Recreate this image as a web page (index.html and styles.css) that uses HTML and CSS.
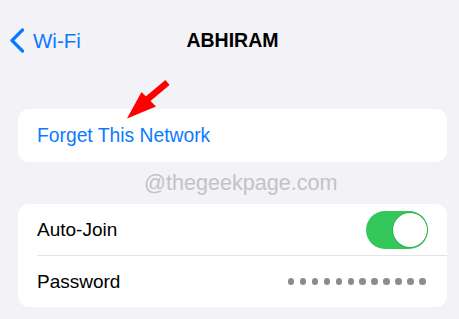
FILE: index.html
```html
<!DOCTYPE html>
<html>
<head>
<meta charset="utf-8">
<link rel="stylesheet" href="styles.css">
</head>
<body>
<div class="page">
  <header class="nav">
    <a class="back">
      <svg class="chev" width="16" height="26" viewBox="0 0 16 26"><path d="M13.5 2 L3 12.5 L13.5 23" fill="none" stroke="#0a7aff" stroke-width="3.2" stroke-linecap="round" stroke-linejoin="round"/></svg>
      <span class="back-label">Wi-Fi</span>
    </a>
    <h1 class="title">ABHIRAM</h1>
    <span></span>
  </header>

  <section class="card single">
    <div class="row"><span class="action">Forget This Network</span></div>
  </section>

  <div class="watermark">@thegeekpage.com</div>

  <section class="card">
    <div class="row">
      <span class="label">Auto-Join</span>
      <span class="toggle"><span class="knob"></span></span>
    </div>
    <div class="divider"></div>
    <div class="row">
      <span class="label">Password</span>
      <span class="dots">
        <i></i><i></i><i></i><i></i><i></i><i></i><i></i><i></i><i></i><i></i><i></i><i></i>
      </span>
    </div>
  </section>

  <svg class="arrow" width="459" height="319" viewBox="0 0 459 319">
    <line x1="146" y1="100.5" x2="167.5" y2="82.5" stroke="#ff0000" stroke-width="6.5"/>
    <polygon points="127,118.5 141.5,92 156,106.5" fill="#ff0000"/>
  </svg>
</div>
</body>
</html>
```

FILE: styles.css
```css
html, body {
  margin: 0;
  padding: 0;
  background: #f2f2f7;
}
body {
  width: 459px;
  height: 319px;
  overflow: hidden;
  font-family: "Liberation Sans", Arial, sans-serif;
}
.page {
  position: relative;
  width: 459px;
  height: 319px;
  display: flex;
  flex-direction: column;
}
.nav {
  height: 82px;
  display: grid;
  grid-template-columns: 1fr auto 1fr;
  align-items: center;
  padding: 0 3px 0 9px;
}
.back {
  display: flex;
  align-items: center;
  gap: 8px;
  color: #0a7aff;
  font-size: 20.5px;
}
.chev {
  display: block;
  margin-top: -1px;
}
.back-label {
  line-height: 1;
}
.title {
  margin: 0;
  font-size: 19.5px;
  font-weight: bold;
  color: #000;
  line-height: 1;
}
.card {
  background: #fff;
  border-radius: 11px;
  margin: 0 12px 0 18px;
  display: flex;
  flex-direction: column;
}
.single {
  margin-top: 27px;
}
.row {
  height: 51px;
  display: flex;
  align-items: center;
  justify-content: space-between;
  padding: 0 19px 0 19px;
}
.single .row {
  height: 53px;
  padding-top: 1px;
  box-sizing: border-box;
}
.action {
  color: #0a7aff;
  font-size: 19.3px;
}
.label {
  color: #000;
  font-size: 19px;
}
.watermark {
  height: 42px;
  line-height: 42px;
  padding-left: 144px;
  font-size: 21.6px;
  color: #c3c3c6;
}
.divider {
  height: 1px;
  background: #e3e3e8;
  margin-left: 19px;
}
.toggle {
  width: 62px;
  height: 38px;
  border-radius: 19px;
  background: #34c759;
  display: flex;
  align-items: center;
  justify-content: flex-end;
  padding-right: 1.5px;
  box-sizing: border-box;
}
.knob {
  width: 34px;
  height: 34px;
  border-radius: 50%;
  background: #fff;
  box-shadow: 0 0 0 0.8px rgba(30, 150, 60, 0.6);
}
.dots {
  display: flex;
  gap: 5.4px;
  margin-right: 2px;
}
.dots i {
  display: block;
  width: 6.6px;
  height: 6.6px;
  border-radius: 50%;
  background: #8c8c90;
}
.arrow {
  position: absolute;
  top: 0;
  left: 0;
  pointer-events: none;
}
```
